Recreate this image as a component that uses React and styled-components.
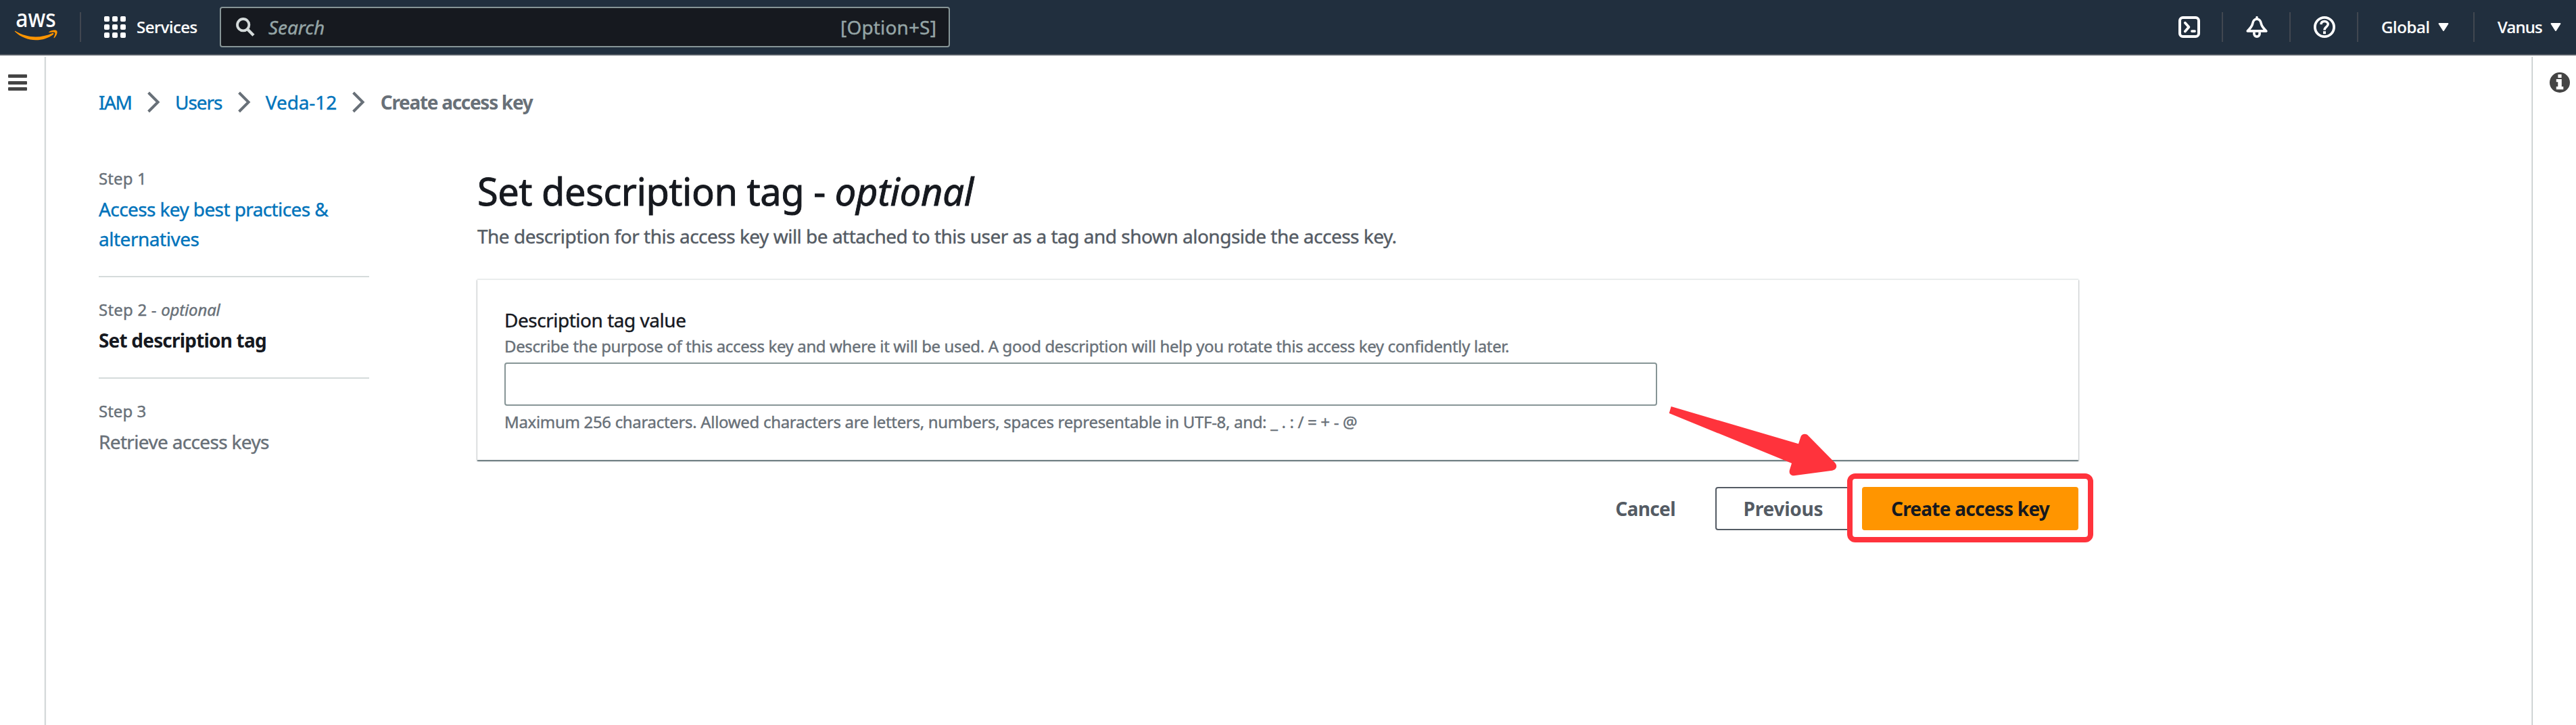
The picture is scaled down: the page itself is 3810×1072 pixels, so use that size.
import React from "react";
import styled, { createGlobalStyle } from "styled-components";

const color = {
  navy: "#212f3e",
  navyLine: "#545b64",
  navDivider: "#414750",
  ink: "#16191f",
  grey: "#687078",
  slate: "#545b64",
  link: "#0073bb",
  border: "#879596",
  rule: "#d5dbdb",
  orange: "#ff9500",
  alert: "#ff333c",
};

const GlobalStyle = createGlobalStyle`
  *, *::before, *::after { box-sizing: border-box; }
  html, body { margin: 0; background: #ffffff; }
  body {
    font-family: "Noto Sans", "Open Sans", sans-serif;
    font-size: 28px;
    line-height: 44px;
    color: ${color.ink};
  }
  a { text-decoration: none; }
  svg { display: block; flex: none; }
`;

const Page = styled.div`
  display: flex;
  flex-direction: column;
  height: 1072px;
  overflow: hidden;
`;

/* ---------- text ---------- */

const Text = styled.span`
  letter-spacing: ${(p) => p.$track || 0}px;
  white-space: nowrap;
  -webkit-text-stroke: ${(p) => p.$stroke ?? 0.4}px currentColor;
`;

/* ---------- top navigation ---------- */

const TopBar = styled.header`
  display: flex;
  align-items: center;
  flex: none;
  height: 82px;
  padding-left: 20px;
  background: ${color.navy};
  border-bottom: 2px solid ${color.navyLine};
  color: #ffffff;
`;

const Divider = styled.span`
  flex: none;
  width: 2px;
  height: 44px;
  background: ${color.navDivider};
`;

const LogoLink = styled.a`
  display: flex;
  width: 98px;
`;

const ServicesButton = styled.div`
  display: flex;
  align-items: center;
  gap: 16px;
  width: 205px;
  padding-left: 34px;
  font-size: 24px;
  font-weight: 500;
`;

const AppGrid = styled.span`
  display: grid;
  grid-template-columns: repeat(3, 8px);
  grid-auto-rows: 8px;
  gap: 4px;
`;

const AppDot = styled.i`
  border-radius: 2px;
  background: #ffffff;
`;

const SearchBox = styled.div`
  display: flex;
  align-items: center;
  width: 1080px;
  height: 60px;
  padding: 0 18px 0 22px;
  border: 2px solid ${color.border};
  border-radius: 4px;
  background: ${color.ink};
  color: #95a5a6;
`;

const SearchHint = styled(Text)`
  flex: 1;
  margin-left: 20px;
  font-style: italic;
`;

const Tools = styled.nav`
  display: flex;
  align-items: center;
  margin-left: auto;
`;

const ToolCell = styled.div`
  display: flex;
  align-items: center;
  justify-content: space-between;
  width: ${(p) => p.$width}px;
  padding: 0 ${(p) => p.$end}px 0 34px;
  font-size: 24px;
  font-weight: 500;
`;

/* ---------- page frame ---------- */

const Frame = styled.div`
  display: flex;
  flex: 1;
  padding-top: 2px;
`;

const LeftRail = styled.aside`
  width: 67px;
  padding: 26px 0 0 12px;
  border-right: 1px solid #c3caca;
  box-shadow: 1px 0 1px rgba(0, 28, 36, 0.12);
`;

const RightRail = styled.aside`
  width: 65px;
  padding: 23px 0 0 25px;
  border-left: 1px solid #c3caca;
  box-shadow: -1px 0 1px rgba(0, 28, 36, 0.12);
`;

const Burger = styled.div`
  display: flex;
  flex-direction: column;
  justify-content: space-between;
  width: 28px;
  height: 24px;
`;

const BurgerBar = styled.i`
  height: 5px;
  border-radius: 1px;
  background: #444444;
`;

const Content = styled.main`
  flex: 1;
  padding: 45px 0 0 79px;
`;

const Breadcrumbs = styled.nav`
  display: flex;
  align-items: center;
  gap: 22.3px;
`;

const Crumb = styled(Text)`
  color: ${(p) => (p.$current ? color.grey : color.link)};
  font-weight: ${(p) => (p.$current ? 700 : 400)};
`;

const Wizard = styled.div`
  display: flex;
  gap: 160px;
  margin-top: 73px;
`;

/* ---------- steps ---------- */

const Steps = styled.ol`
  width: 400px;
  margin: 2px 0 0;
  padding: 0;
  list-style: none;
`;

const Step = styled.li`
  padding-bottom: 33px;

  & + & {
    padding-top: 32px;
    border-top: 2px solid ${color.rule};
  }
`;

const StepName = styled.div`
  margin-bottom: 7px;
  font-size: 24px;
  line-height: 32px;
  color: ${color.grey};
`;

const StepTitle = styled.div`
  color: ${(p) => p.$color};
  font-weight: ${(p) => (p.$active ? 700 : 400)};
`;

const TitleLine = styled(Text)`
  display: block;
`;

/* ---------- form ---------- */

const FormColumn = styled.section`
  width: 2368px;
`;

const Heading = styled.h1`
  margin: 0;
  font-size: 56px;
  line-height: 72px;
  font-weight: 400;
`;

const Lead = styled.p`
  margin: 9px 0 0;
  color: ${color.slate};
`;

const Card = styled.div`
  height: 268px;
  margin-top: 41px;
  padding: 37px 40px 0;
  border-top: 2px solid #eaeded;
  background: #ffffff;
  box-shadow:
    0 2px 1px 0 rgba(0, 28, 36, 0.36),
    1px 2px 2px 0 rgba(0, 28, 36, 0.2),
    -1px 2px 2px 0 rgba(0, 28, 36, 0.2);
`;

const Label = styled.label`
  display: block;
`;

const Help = styled.div`
  margin-top: ${(p) => p.$gap}px;
  font-size: 24px;
  line-height: 32px;
  color: ${color.grey};
`;

const Input = styled.input`
  display: block;
  width: 1705px;
  height: 64px;
  margin-top: 8px;
  padding: 0 18px;
  border: 2px solid ${color.border};
  border-radius: 4px;
  outline: none;
  background: #ffffff;
  font: inherit;
`;

const Actions = styled.div`
  position: relative;
  display: flex;
  justify-content: flex-end;
  gap: 16px;
  margin-top: 40px;
`;

const Button = styled.button`
  display: flex;
  align-items: center;
  justify-content: center;
  width: ${(p) => p.$width}px;
  height: 64px;
  padding: 0;
  border: 2px solid ${(p) => p.$edge || "transparent"};
  border-radius: 4px;
  background: ${(p) => p.$fill || "transparent"};
  color: ${(p) => p.$ink || color.slate};
  font-family: inherit;
  font-size: 28px;
  font-weight: 700;
  line-height: 40px;
`;

const Highlight = styled.div`
  position: relative;

  &::after {
    content: "";
    position: absolute;
    inset: -20px -22px -18px;
    border: 8px solid ${color.alert};
    border-radius: 12px;
  }
`;

const Pointer = styled.svg`
  position: absolute;
  left: 1758px;
  top: -122px;
`;

/* ---------- icons ---------- */

const AwsLogo = () => (
  <svg width="68" height="80" viewBox="20 0 68 80">
    <text
      x="23.2"
      y="40.4"
      fill="#ffffff"
      fontFamily="Noto Sans, sans-serif"
      fontSize="37"
      fontWeight="500"
      textLength="59.5"
      lengthAdjust="spacingAndGlyphs"
    >
      aws
    </text>
    <g fill={color.orange}>
      <path d="M21.8 46.6C21.6 45.8 22.3 45.7 23 46.1C40 56.5 60 57 77.5 49C79.2 48.4 80.2 50 78.6 51.2C63 62.6 38 62.6 21.8 46.6Z" />
      <path d="M72.4 47.2C76 44.4 82.5 43.8 84.2 45.8C85.6 47.8 83.5 53.5 80.4 56C79.6 56.5 79.3 56 79.6 55.2C80.8 52.5 82 49.3 81.3 48.2C80.4 47 76.5 47.4 73.2 47.9C72.2 48 71.8 47.7 72.4 47.2Z" />
    </g>
  </svg>
);

const SearchIcon = () => (
  <svg width="28" height="28" viewBox="0 0 28 28" fill="none" stroke="#d5dbdb">
    <circle cx="10.7" cy="10.7" r="8.7" strokeWidth="3.8" />
    <path d="M16.6 16.8L26 26.2" strokeWidth="4.4" />
  </svg>
);

const TerminalIcon = () => (
  <svg width="32" height="32" viewBox="0 0 32 32" fill="none" stroke="#ffffff" strokeLinecap="round" strokeLinejoin="round">
    <rect x="2" y="2" width="28" height="28" rx="4.5" strokeWidth="4" />
    <path d="M9.8 9.8L15.4 16L9.8 22.4" strokeWidth="3.8" />
    <path d="M20 22.1H24" strokeWidth="3.8" />
  </svg>
);

const BellIcon = () => (
  <svg width="32" height="32" viewBox="0 0 32 32" fill="none" stroke="#ffffff" strokeLinejoin="round">
    <path
      d="M2.2 21.9C6.5 17.6 8.8 15.4 9.6 11.2C10.4 6.2 12.5 4.2 16 4.2C19.5 4.2 21.6 6.2 22.4 11.2C23.2 15.4 25.5 17.6 29.8 21.9Z"
      strokeWidth="3.6"
    />
    <path d="M16 1.6V4" strokeWidth="3.4" strokeLinecap="round" />
    <path d="M11.9 23.5V26A4.1 4.1 0 0 0 20.1 26V23.5" strokeWidth="3.6" />
  </svg>
);

const HelpIcon = () => (
  <svg width="32" height="32" viewBox="0 0 32 32" fill="none" stroke="#ffffff">
    <circle cx="16" cy="16" r="14.1" strokeWidth="3.8" />
    <path d="M10.9 12.2C11.1 9 13 7.6 16 7.6C19 7.6 21.2 9.2 21.2 12C21.2 15.6 16 15.6 16 20.4" strokeWidth="3.5" />
    <path d="M16 22.2V26.2" strokeWidth="4" />
  </svg>
);

const Caret = () => (
  <svg width="16" height="12" viewBox="0 0 16 12">
    <path d="M1.6 1H14.4L8 11Z" fill="#ffffff" stroke="#ffffff" strokeWidth="2" strokeLinejoin="round" />
  </svg>
);

const Chevron = () => (
  <svg width="20" height="32" viewBox="0 0 20 32">
    <path d="M2.6 2L16.6 16L2.6 30" fill="none" stroke={color.grey} strokeWidth="4" />
  </svg>
);

const InfoIcon = () => (
  <svg width="30" height="30" viewBox="0 0 30 30">
    <circle cx="15" cy="15" r="15" fill="#444444" />
    <path d="M12.4 3H17.6V8H12.4ZM9.8 10H17.8V21H20.3V25.2H9.8V21H12.3V14.2H9.8Z" fill="#ffffff" />
  </svg>
);

const crumbs = [
  { text: "IAM", track: -1.44 },
  { text: "Users", track: -1.1 },
  { text: "Veda-12", track: -0.1 },
  { text: "Create access key", track: -1.3, current: true },
];

export default function App() {
  return (
    <Page>
      <GlobalStyle />
      <TopBar>
        <LogoLink><AwsLogo /></LogoLink>
        <Divider />
        <ServicesButton>
          <AppGrid>
            {Array.from({ length: 9 }, (_, i) => <AppDot key={i} />)}
          </AppGrid>
          <Text $track={-0.47} $stroke={0.2}>Services</Text>
        </ServicesButton>
        <SearchBox>
          <SearchIcon />
          <SearchHint $track={-0.06}>Search</SearchHint>
          <Text $track={0.14}>[Option+S]</Text>
        </SearchBox>
        <Tools>
          <ToolCell $width={98} $end={32}><TerminalIcon /></ToolCell>
          <Divider />
          <ToolCell $width={98} $end={32}><BellIcon /></ToolCell>
          <Divider />
          <ToolCell $width={98} $end={32}><HelpIcon /></ToolCell>
          <Divider />
          <ToolCell $width={170} $end={36}><Text $track={-0.34} $stroke={0.2}>Global</Text><Caret /></ToolCell>
          <Divider />
          <ToolCell $width={150} $end={22}><Text $track={-0.8} $stroke={0.2}>Vanus</Text><Caret /></ToolCell>
        </Tools>
      </TopBar>

      <Frame>
        <LeftRail>
          <Burger><BurgerBar /><BurgerBar /><BurgerBar /></Burger>
        </LeftRail>

        <Content>
          <Breadcrumbs>
            {crumbs.map((c, i) => (
              <React.Fragment key={c.text}>
                {i > 0 && <Chevron />}
                <Crumb
                  as={c.current ? "span" : "a"}
                  $track={c.track}
                  $current={c.current}
                  $stroke={c.current ? 0 : 0.4}
                >
                  {c.text}
                </Crumb>
              </React.Fragment>
            ))}
          </Breadcrumbs>

          <Wizard>
            <Steps>
              <Step>
                <StepName><Text $track={0.1}>Step 1</Text></StepName>
                <StepTitle $color={color.link}>
                  <TitleLine $track={-0.6}>Access key best practices &amp;</TitleLine>
                  <TitleLine $track={-0.48}>alternatives</TitleLine>
                </StepTitle>
              </Step>
              <Step>
                <StepName><Text $track={0.2}>Step 2 - </Text><Text as="em" $track={-0.16}>optional</Text></StepName>
                <StepTitle $color={color.ink} $active><Text $track={-0.81} $stroke={0}>Set description tag</Text></StepTitle>
              </Step>
              <Step>
                <StepName><Text>Step 3</Text></StepName>
                <StepTitle $color={color.grey}><Text $track={-0.66}>Retrieve access keys</Text></StepTitle>
              </Step>
            </Steps>

            <FormColumn>
              <Heading>
                <Text $track={-0.5} $stroke={0.9}>Set description tag - </Text>
                <Text as="em" $track={-0.25} $stroke={0.9}>optional</Text>
              </Heading>
              <Lead>
                <Text $track={-0.5}>
                  The description for this access key will be attached to this user as a tag and shown alongside the access key.
                </Text>
              </Lead>
              <Card>
                <Label><Text $track={-0.48}>Description tag value</Text></Label>
                <Help $gap={1}>
                  <Text $track={-0.37}>
                    Describe the purpose of this access key and where it will be used. A good description will help you rotate this access key confidently later.
                  </Text>
                </Help>
                <Input />
                <Help $gap={8}>
                  <Text $track={-0.32}>
                    Maximum 256 characters. Allowed characters are letters, numbers, spaces representable in UTF-8, and: _ . : / = + - @
                  </Text>
                </Help>
              </Card>
              <Actions>
                <Button $width={175}><Text $track={-0.62} $stroke={0}>Cancel</Text></Button>
                <Button $width={201} $edge={color.slate}><Text $track={-0.22} $stroke={0}>Previous</Text></Button>
                <Highlight>
                  <Button $width={320} $edge={color.orange} $fill={color.orange} $ink={color.ink}>
                    <Text $track={-0.75} $stroke={0}>Create access key</Text>
                  </Button>
                </Highlight>
                <Pointer width="256" height="110" viewBox="0 0 256 110">
                  <path
                    fill={color.alert}
                    d="M7.7 3L196 58.3L199.3 48C201 43.4 207 42.4 210.5 46.2L250.2 86.5C254.2 91 251.8 97 246 97.7L189.5 105.2C184.5 105.7 181.6 101.6 182.9 97L186 87L4.7 13Z"
                  />
                </Pointer>
              </Actions>
            </FormColumn>
          </Wizard>
        </Content>

        <RightRail><InfoIcon /></RightRail>
      </Frame>
    </Page>
  );
}
